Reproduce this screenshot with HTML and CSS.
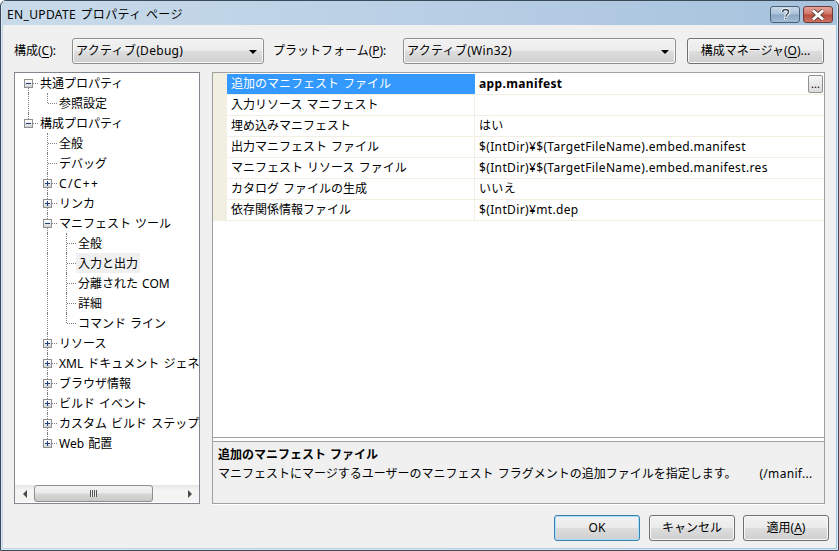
FILE: index.html
```html
<!DOCTYPE html>
<html lang="ja">
<head>
<meta charset="utf-8">
<title>EN_UPDATE プロパティ ページ</title>
<link rel="stylesheet" href="styles.css">
</head>
<body>
<div class="window">
  <div class="titlebar">
    <span class="title">EN_UPDATE プロパティ ページ</span>
    <div class="caption-buttons">
      <button class="cap cap-help" aria-label="ヘルプ">
        <svg width="13" height="13" viewBox="0 0 13 13"><path d="M3.5 4.2C3.8 2.4 5 1.6 6.6 1.6c1.8 0 3 1 3 2.5 0 1.2-.7 1.8-1.6 2.4-.7.5-1 .9-1 1.9" fill="none" stroke="#fff" stroke-width="3.4"/><rect x="5.3" y="9.2" width="2.8" height="2.8" fill="#fff"/><path d="M3.5 4.2C3.8 2.4 5 1.6 6.6 1.6c1.8 0 3 1 3 2.5 0 1.2-.7 1.8-1.6 2.4-.7.5-1 .9-1 1.9" fill="none" stroke="#39485a" stroke-width="1.5"/><rect x="6" y="9.9" width="1.5" height="1.5" fill="#39485a"/></svg>
      </button>
      <button class="cap cap-close" aria-label="閉じる">
        <svg width="16" height="12" viewBox="0 0 16 12"><path d="M3 1.5 13 10.5M13 1.5 3 10.5" stroke="#5a3a38" stroke-width="4.6"/><path d="M3 1.5 13 10.5M13 1.5 3 10.5" stroke="#fff" stroke-width="3"/></svg>
      </button>
    </div>
  </div>
  <div class="client">
    <div class="toolbar">
      <label class="lbl lbl-config">構成(<u>C</u>):</label>
      <div class="combo combo-config"><span class="wide">アクティブ(Debug)</span><i class="caret"></i></div>
      <label class="lbl lbl-platform">プラットフォーム(<u>P</u>):</label>
      <div class="combo combo-platform"><span class="wide">アクティブ(Win32)</span><i class="caret"></i></div>
      <button class="btn btn-manager">構成マネージャ(<u>O</u>)...</button>
    </div>
    <div class="main">
      <div class="tree-pane">
        <div class="tree">
          <div class="node"><span class="g g-first"><i class="tog minus"></i></span><span class="lab">共通プロパティ</span></div>
          <div class="node"><span class="g g-line"></span><span class="g g-end"></span><span class="lab">参照設定</span></div>
          <div class="node"><span class="g g-last"><i class="tog minus"></i></span><span class="lab">構成プロパティ</span></div>
          <div class="node"><span class="g"></span><span class="g g-tee"></span><span class="lab">全般</span></div>
          <div class="node"><span class="g"></span><span class="g g-tee"></span><span class="lab">デバッグ</span></div>
          <div class="node"><span class="g"></span><span class="g g-tee"><i class="tog plus"></i></span><span class="lab lab-cpp">C/C++</span></div>
          <div class="node"><span class="g"></span><span class="g g-tee"><i class="tog plus"></i></span><span class="lab">リンカ</span></div>
          <div class="node"><span class="g"></span><span class="g g-tee"><i class="tog minus"></i></span><span class="lab">マニフェスト ツール</span></div>
          <div class="node"><span class="g"></span><span class="g g-line"></span><span class="g g-tee"></span><span class="lab">全般</span></div>
          <div class="node"><span class="g"></span><span class="g g-line"></span><span class="g g-tee"></span><span class="lab sel">入力と出力</span></div>
          <div class="node"><span class="g"></span><span class="g g-line"></span><span class="g g-tee"></span><span class="lab">分離された COM</span></div>
          <div class="node"><span class="g"></span><span class="g g-line"></span><span class="g g-tee"></span><span class="lab">詳細</span></div>
          <div class="node"><span class="g"></span><span class="g g-line"></span><span class="g g-end"></span><span class="lab">コマンド ライン</span></div>
          <div class="node"><span class="g"></span><span class="g g-tee"><i class="tog plus"></i></span><span class="lab">リソース</span></div>
          <div class="node"><span class="g"></span><span class="g g-tee"><i class="tog plus"></i></span><span class="lab">XML ドキュメント ジェネ</span></div>
          <div class="node"><span class="g"></span><span class="g g-tee"><i class="tog plus"></i></span><span class="lab">ブラウザ情報</span></div>
          <div class="node"><span class="g"></span><span class="g g-tee"><i class="tog plus"></i></span><span class="lab">ビルド イベント</span></div>
          <div class="node"><span class="g"></span><span class="g g-tee"><i class="tog plus"></i></span><span class="lab">カスタム ビルド ステップ</span></div>
          <div class="node"><span class="g"></span><span class="g g-end"><i class="tog plus"></i></span><span class="lab">Web 配置</span></div>
        </div>
        <div class="hscroll">
          <span class="arrow arrow-l"></span>
          <div class="track">
            <div class="thumb"><span class="grip"></span></div>
          </div>
          <span class="arrow arrow-r"></span>
        </div>
      </div>
      <div class="prop-pane">
        <div class="grid">
          <div class="prow"><div class="pname selected">追加のマニフェスト ファイル</div><div class="pval bold">app.manifest<button class="ellipsis">...</button></div></div>
          <div class="prow"><div class="pname">入力リソース マニフェスト</div><div class="pval"></div></div>
          <div class="prow"><div class="pname">埋め込みマニフェスト</div><div class="pval">はい</div></div>
          <div class="prow"><div class="pname">出力マニフェスト ファイル</div><div class="pval">$(IntDir)¥$(TargetFileName).embed.manifest</div></div>
          <div class="prow"><div class="pname">マニフェスト リソース ファイル</div><div class="pval">$(IntDir)¥$(TargetFileName).embed.manifest.res</div></div>
          <div class="prow"><div class="pname">カタログ ファイルの生成</div><div class="pval">いいえ</div></div>
          <div class="prow"><div class="pname">依存関係情報ファイル</div><div class="pval">$(IntDir)¥mt.dep</div></div>
        </div>
        <div class="desc">
          <div class="desc-title">追加のマニフェスト ファイル</div>
          <div class="desc-text"><span>マニフェストにマージするユーザーのマニフェスト フラグメントの追加ファイルを指定します。</span><span class="wide">(/manif...</span></div>
        </div>
      </div>
    </div>
    <div class="footer">
      <button class="btn btn-foot btn-ok">OK</button>
      <button class="btn btn-foot">キャンセル</button>
      <button class="btn btn-foot">適用(<u>A</u>)</button>
    </div>
  </div>
</div>
</body>
</html>
```
FILE: styles.css
```css
* { box-sizing: border-box; }
html, body { margin: 0; padding: 0; background: #fff; }
body { width: 839px; height: 551px; overflow: hidden; font: 12px/20px "Noto Sans", "Noto Sans CJK JP", sans-serif; color: #000; word-spacing: 1px; }
button { font: inherit; word-spacing: inherit; color: inherit; padding: 0; margin: 0; }
u { text-underline-offset: 2px; }
.wide { letter-spacing: .3px; }

.window { width: 839px; height: 551px; display: flex; flex-direction: column; border: 1px solid #3a4a58; border-radius: 6px 6px 0 0; background: linear-gradient(90deg, #c3d6e8 0%, #b5cce3 50%, #a6c2dd 100%); padding: 0 2px 2px; box-shadow: inset 0 0 0 1px #dbe7f2; }

.titlebar { height: 24px; flex: none; display: flex; align-items: flex-start; justify-content: space-between; padding-left: 4px; background: linear-gradient(90deg, #c9dbea 0%, #b9cfe5 50%, #a6c2dd 100%); }
.title { font-size: 12px; line-height: 28px; letter-spacing: .35px; color: #000; }
.caption-buttons { display: flex; gap: 3px; margin-right: 3px; }
.cap { height: 17px; border: 1px solid #4c5f74; border-radius: 3px; display: flex; align-items: center; justify-content: center; margin-top: 5px; }
.cap-help { width: 30px; background: linear-gradient(#c9d9ea 0%, #a9c0d9 48%, #8ba7c4 52%, #a4bdd6 100%); }
.cap-close { width: 30px; border-color: #6e3a36; background: linear-gradient(#e4a49a 0%, #cf7466 48%, #b84a3a 52%, #cc7466 100%); }

.client { flex: 1; display: flex; flex-direction: column; background: #f0f0f0; padding: 13px 6px 0 11px; }

.toolbar { display: flex; align-items: center; height: 26px; flex: none; }
.lbl { white-space: nowrap; }
.lbl-config { width: 58px; }
.lbl-platform { width: 130px; }
.combo { height: 26px; display: flex; align-items: center; justify-content: space-between; padding: 0 6px 0 3px; border: 1px solid #8e8f8f; border-radius: 3px; background: linear-gradient(#f2f2f2 0%, #ebebeb 48%, #dddddd 52%, #cfcfcf 100%); box-shadow: inset 0 0 0 1px #f8f8f8; }
.combo-config { width: 192px; margin-right: 9px; }
.combo-platform { width: 273px; margin-right: 11px; }
.caret { width: 0; height: 0; border-left: 4px solid transparent; border-right: 4px solid transparent; border-top: 4px solid #000; margin-top: 2px; }

.btn { border: 1px solid #707070; border-radius: 3px; background: linear-gradient(#f2f2f2 0%, #ebebeb 48%, #dddddd 52%, #cfcfcf 100%); box-shadow: inset 0 0 0 1px #f8f8f8; display: flex; align-items: center; justify-content: center; white-space: nowrap; }
.btn-manager { width: 137px; height: 26px; }

.main { display: flex; gap: 12px; margin-top: 8px; height: 433px; flex: none; }

.tree-pane { width: 186px; height: 432px; border: 1px solid #828790; background: #fff; display: flex; flex-direction: column; flex: none; }
.tree { flex: 1; min-height: 0; overflow: hidden; padding: 0 0 0 4px; }
.node { height: 20px; display: flex; align-items: stretch; white-space: nowrap; }
.lab { padding: 0 2px; line-height: 22px; flex: none; }
.lab.sel { background: #f0f0f0; }
.lab-cpp { letter-spacing: 1.4px; }
.g { width: 19px; flex: none; position: relative; display: block; }
.g-first::before { content: ""; position: absolute; left: 9px; top: 10px; bottom: 0; border-left: 1px dotted #808080; }
.g-last::before { content: ""; position: absolute; left: 9px; top: 0; height: 10px; border-left: 1px dotted #808080; }
.g-first::after, .g-last::after, .g-tee::after, .g-end::after { content: ""; position: absolute; left: 10px; top: 10px; width: 9px; border-top: 1px dotted #808080; }
.g-line::before, .g-tee::before { content: ""; position: absolute; left: 9px; top: 0; bottom: 0; border-left: 1px dotted #808080; }
.g-end::before { content: ""; position: absolute; left: 9px; top: 0; height: 10px; border-left: 1px dotted #808080; }

.tog { position: absolute; left: 5px; top: 6px; width: 9px; height: 9px; border: 1px solid #8f8f8f; background: linear-gradient(#fff, #d4d4d4); z-index: 1; }
.tog::before { content: ""; position: absolute; left: 1px; top: 3px; width: 5px; height: 1px; background: #1f3f7a; }
.tog.plus::after { content: ""; position: absolute; left: 3px; top: 1px; width: 1px; height: 5px; background: #1f3f7a; }

.hscroll { height: 17px; flex: none; display: flex; align-items: center; margin: 0 0 1px; background: linear-gradient(#e6e6e6, #f4f4f4 30%, #f4f4f4); }
.arrow { width: 19px; height: 17px; flex: none; display: flex; align-items: center; justify-content: center; }
.arrow::before { content: ""; width: 0; height: 0; border-top: 4px solid transparent; border-bottom: 4px solid transparent; }
.arrow-l::before { border-right: 4px solid #4a4a4a; }
.arrow-r::before { border-left: 4px solid #4a4a4a; }
.track { flex: 1; height: 17px; }
.thumb { width: 119px; height: 17px; border: 1px solid #8e8f8f; border-radius: 3px; background: linear-gradient(#f2f2f2 0%, #ebebeb 48%, #d8d8d8 52%, #c8c8c8 100%); display: flex; align-items: center; justify-content: center; }
.grip { width: 7px; height: 7px; background: repeating-linear-gradient(90deg, #555 0 1px, #eee 1px 2px); }

.prop-pane { width: 613px; height: 432px; flex: none; border: 1px solid #a0a0a0; display: flex; flex-direction: column; background: #fff; box-shadow: 0 1px 0 #fff; }
.grid { height: 365px; flex: none; background: #fff; border-bottom: 1px solid #a0a0a0; }
.prow { height: 21px; display: flex; margin-left: 14px; border-bottom: 1px solid #f1efe2; box-shadow: -14px 0 0 #f1efe2; }
.prow:first-child { height: 22px; border-top: 1px solid #fff; }
.pname { width: 248px; padding-left: 4px; border-right: 1px solid #f1efe2; white-space: nowrap; line-height: 20px; }
.pname.selected { background: #3399ff; color: #fff; border-right-color: #3399ff; }
.pval { flex: 1; padding-left: 4px; line-height: 20px; letter-spacing: .36px; white-space: nowrap; display: flex; justify-content: space-between; align-items: flex-start; }
.bold { font-weight: 700; }
.ellipsis { width: 15px; height: 18px; margin: 1px 1px 0 0; border: 1px solid #8e8f8f; border-radius: 2px; background: linear-gradient(#f6f6f6, #dcdcdc); font-weight: 400; font-size: 11px; line-height: 16px; letter-spacing: 0; }

.desc { margin-top: 3px; flex: 1; border-top: 1px solid #a0a0a0; background: #f0f0f0; padding: 3px 5px 0; }
.desc-title { font-weight: 700; line-height: 19px; }
.desc-text { display: flex; gap: 23px; line-height: 20px; white-space: nowrap; }

.footer { flex: none; display: flex; justify-content: flex-end; gap: 8px; padding-top: 10px; margin-right: 1px; }
.btn-foot { width: 86px; height: 26px; }
.btn-ok { border-color: #3c7fb1; box-shadow: inset 0 0 0 1px #a8e0f5; margin-right: 1px; }
```
